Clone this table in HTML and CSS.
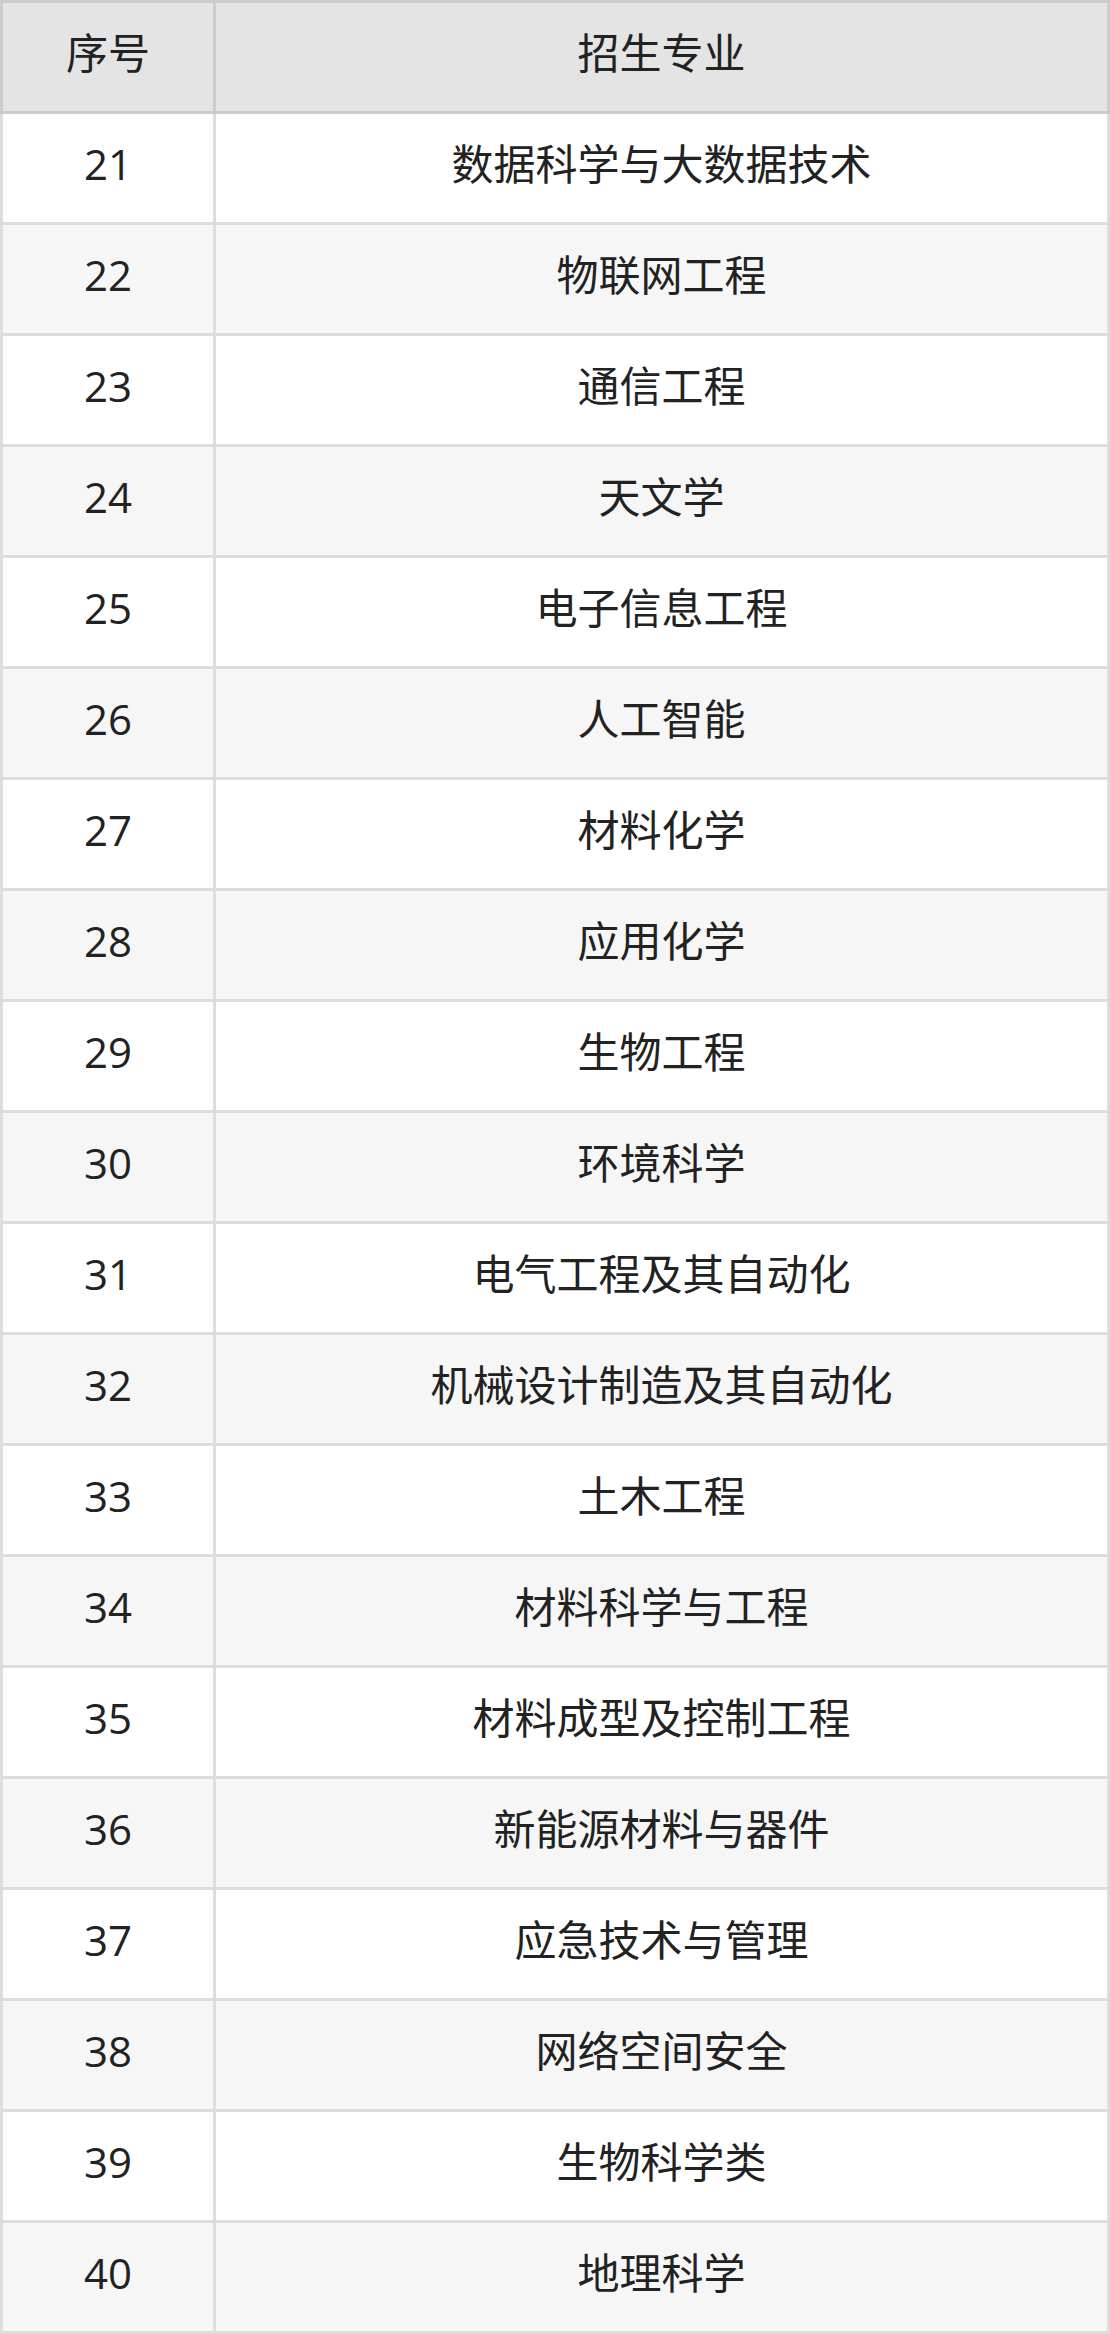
FILE: index.html
```html
<!DOCTYPE html>
<html lang="zh-CN">
<head>
<meta charset="utf-8">
<title>招生专业</title>
<link rel="stylesheet" href="styles.css">
</head>
<body>
<table class="majors">
  <thead>
    <tr><th class="col-no">序号</th><th class="col-name">招生专业</th></tr>
  </thead>
  <tbody>
    <tr><td>21</td><td>数据科学与大数据技术</td></tr>
    <tr><td>22</td><td>物联网工程</td></tr>
    <tr><td>23</td><td>通信工程</td></tr>
    <tr><td>24</td><td>天文学</td></tr>
    <tr><td>25</td><td>电子信息工程</td></tr>
    <tr><td>26</td><td>人工智能</td></tr>
    <tr><td>27</td><td>材料化学</td></tr>
    <tr><td>28</td><td>应用化学</td></tr>
    <tr><td>29</td><td>生物工程</td></tr>
    <tr><td>30</td><td>环境科学</td></tr>
    <tr><td>31</td><td>电气工程及其自动化</td></tr>
    <tr><td>32</td><td>机械设计制造及其自动化</td></tr>
    <tr><td>33</td><td>土木工程</td></tr>
    <tr><td>34</td><td>材料科学与工程</td></tr>
    <tr><td>35</td><td>材料成型及控制工程</td></tr>
    <tr><td>36</td><td>新能源材料与器件</td></tr>
    <tr><td>37</td><td>应急技术与管理</td></tr>
    <tr><td>38</td><td>网络空间安全</td></tr>
    <tr><td>39</td><td>生物科学类</td></tr>
    <tr><td>40</td><td>地理科学</td></tr>
  </tbody>
</table>
</body>
</html>
```
FILE: styles.css
```css
html, body {
  margin: 0;
  padding: 0;
  background: #ffffff;
}

body {
  font-family: "Open Sans", "Noto Sans CJK SC", sans-serif;
  font-size: 42px;
  color: #222222;
}

.majors {
  width: 1110px;
  border-collapse: separate;
  border-spacing: 0;
  table-layout: fixed;
}

.majors th,
.majors td {
  box-sizing: border-box;
  padding: 0;
  text-align: center;
  vertical-align: middle;
  font-weight: normal;
  line-height: 1.2;
  border-right: 3px solid #dddddd;
  border-bottom: 3px solid #dddddd;
}

.majors th:first-child,
.majors td:first-child {
  border-left: 3px solid #dddddd;
}

.majors .col-no {
  width: 216px;
}

.majors th {
  height: 114px;
  padding-bottom: 7px;
  background: #e4e4e4;
  border-top: 3px solid #cccccc;
  border-right-color: #cccccc;
  border-bottom-color: #cccccc;
}

.majors th:first-child {
  border-left-color: #cccccc;
}

.majors td {
  height: 111px;
  padding-bottom: 7px;
}

.majors tbody tr:nth-child(odd) td {
  background: #ffffff;
}

.majors tbody tr:nth-child(even) td {
  background: #f6f6f6;
}
```
